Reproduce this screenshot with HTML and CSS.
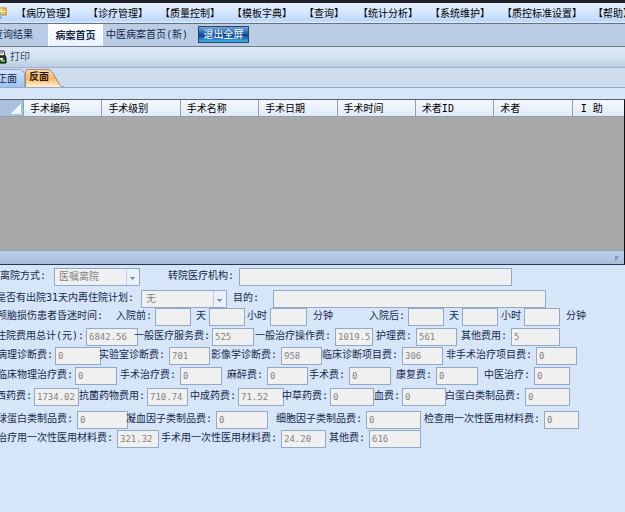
FILE: index.html
```html
<!DOCTYPE html>
<html lang="zh-CN">
<head>
<meta charset="utf-8">
<title>病案首页</title>
<link rel="stylesheet" href="styles.css">
</head>
<body>
<header class="menubar">
  <svg class="app-icon" viewBox="0 0 14 12" aria-hidden="true"><rect x="4" y="1" width="9" height="7" fill="#f7c948" stroke="#b97d1c"/><path d="M8.500 1v7M4 4.500h9" stroke="#fff3c0"/><rect x="0" y="6" width="8" height="5" fill="#dce9fa" stroke="#6f8fbf"/></svg>
  <nav class="menu">
    <button>【病历管理】</button><button>【诊疗管理】</button><button>【质量控制】</button><button>【模板字典】</button><button class="short">【查询】</button><button>【统计分析】</button><button>【系统维护】</button><button class="long">【质控标准设置】</button><button>【帮助】</button>
  </nav>
</header>
<nav class="docs">
  <button class="doc first">查询结果</button>
  <button class="doc current">病案首页</button>
  <button class="doc wide">中医病案首页(新)</button>
  <button class="exit">退出全屏</button>
</nav>
<div class="toolbar">
  <button class="print"><svg class="print-icon" viewBox="0 0 14 14" aria-hidden="true"><path d="M3 1h8l1 5H2z" fill="#fff" stroke="#222"/><path d="M4 3h6" stroke="#555"/><path d="M1 6h11l1 2v5H1z" fill="#444" stroke="#000"/><path d="M2 8h8v2H2z" fill="#d9dccf"/><path d="M8 10h4v2H8z" fill="#52c820"/></svg>打印</button>
</div>
<nav class="sides">
  <button class="side front">正面</button>
  <button class="side back"><svg class="side-shape" viewBox="0 0 39 18" preserveAspectRatio="none" aria-hidden="true"><defs><linearGradient id="warm" x2="0" y2="1"><stop offset="0" stop-color="#f6d9b4"/><stop offset=".5" stop-color="#fbb866"/><stop offset="1" stop-color="#fff0d4"/></linearGradient></defs><path d="M.5 18V3Q.5.5 3 .5H22Q27 1 29 6L34 15Q36 18 39 18" fill="url(#warm)" stroke="#a98a69"/></svg><span>反面</span></button>
</nav>
<main class="page">
  <section class="grid-box">
    <table class="ops">
      <thead><tr><th class="corner" aria-label="全选"></th><th>手术编码</th><th>手术级别</th><th>手术名称</th><th>手术日期</th><th>手术时间</th><th>术者ID</th><th>术者</th><th class="aide">I 助</th></tr></thead>
    </table>
    <div class="grid-foot"><svg class="grip" viewBox="0 0 5 6" aria-hidden="true"><path d="M0 6V1h4L1 6z" fill="#7f9cc4"/></svg></div>
  </section>
  <form class="fees">
    <div class="row r1"><label for="a1">离院方式:</label><select id="a1" disabled><option>医嘱离院</option></select><label for="a2">转院医疗机构:</label><input id="a2" disabled></div>
    <div class="row r2"><label for="b1">是否有出院31天内再住院计划:</label><select id="b1" disabled><option>无</option></select><label class="purpose" for="b2">目的:</label><input id="b2" disabled></div>
    <div class="row r3"><span>颅脑损伤患者昏迷时间:</span><label for="c1">入院前:</label><input id="c1" disabled><label for="c2">天</label><input id="c2" disabled><label for="c3">小时</label><input id="c3" disabled><span>分钟</span><label for="c4">入院后:</label><input id="c4" disabled><label for="c5">天</label><input id="c5" disabled><label for="c6">小时</label><input id="c6" disabled><span>分钟</span></div>
    <div class="row r4"><label for="d1">住院费用总计(元):</label><input id="d1" value="6842.56" disabled><label for="d2">一般医疗服务费:</label><input id="d2" value="525" disabled><label for="d3">一般治疗操作费:</label><input id="d3" value="1019.5" disabled><label for="d4">护理费:</label><input id="d4" value="561" disabled><label for="d5">其他费用:</label><input id="d5" value="5" disabled></div>
    <div class="row r5"><label for="e1">病理诊断费:</label><input id="e1" value="0" disabled><label for="e2">实验室诊断费:</label><input id="e2" value="701" disabled><label for="e3">影像学诊断费:</label><input id="e3" value="958" disabled><label for="e4">临床诊断项目费:</label><input id="e4" value="306" disabled><label for="e5">非手术治疗项目费:</label><input id="e5" value="0" disabled></div>
    <div class="row r6"><label for="f1">临床物理治疗费:</label><input id="f1" value="0" disabled><label for="f2">手术治疗费:</label><input id="f2" value="0" disabled><label for="f3">麻醉费:</label><input id="f3" value="0" disabled><label for="f4">手术费:</label><input id="f4" value="0" disabled><label for="f5">康复费:</label><input id="f5" value="0" disabled><label for="f6">中医治疗:</label><input id="f6" value="0" disabled></div>
    <div class="row r7"><label for="g1">西药费:</label><input id="g1" value="1734.02" disabled><label for="g2">抗菌药物费用:</label><input id="g2" value="710.74" disabled><label for="g3">中成药费:</label><input id="g3" value="71.52" disabled><label for="g4">中草药费:</label><input id="g4" value="0" disabled><label for="g5">血费:</label><input id="g5" value="0" disabled><label for="g6">白蛋白类制品费:</label><input id="g6" value="0" disabled></div>
    <div class="row r8"><label for="h1">球蛋白类制品费:</label><input id="h1" value="0" disabled><label for="h2">凝血因子类制品费:</label><input id="h2" value="0" disabled><label for="h3">细胞因子类制品费:</label><input id="h3" value="0" disabled><label for="h4">检查用一次性医用材料费:</label><input id="h4" value="0" disabled></div>
    <div class="row r9"><label for="i1">治疗用一次性医用材料费:</label><input id="i1" value="321.32" disabled><label for="i2">手术用一次性医用材料费:</label><input id="i2" value="24.20" disabled><label for="i3">其他费:</label><input id="i3" value="616" disabled></div>
  </form>
</main>
</body>
</html>
```
FILE: styles.css
```css
* { box-sizing: border-box; }
html { background: #d7e5f8; }
body {
  margin: 0;
  overflow: hidden;
  background: #d7e5f8;
  color: #15294b;
  font: 10px/16px "DejaVu Sans Mono", "Noto Sans CJK SC", monospace;
}
button {
  margin: 0;
  padding: 0;
  border: 0;
  background: none;
  color: inherit;
  font: inherit;
  white-space: nowrap;
}

.menubar {
  display: flex;
  align-items: center;
  height: 24px;
  overflow: hidden;
  border-top: 3px solid #1d2027;
  border-bottom: 1px solid #68727f;
  background: linear-gradient(#e6f0fd, #d5e6fc 45%, #bdd8fb 90%, #e3efff);
  color: #000;
}
.app-icon { flex: none; width: 14px; height: 12px; margin-left: -7px; }
.menu { display: flex; margin-left: 9px; padding-top: 2px; }
.menu button { flex: none; width: 72px; text-align: left; }
.menu .short { width: 54px; }
.menu .long { width: 91px; }

.docs {
  display: flex;
  height: 23px;
  border-bottom: 1px solid #6d7c90;
  background: #bacde5;
}
.doc { flex: none; line-height: 20px; }
.doc.first { width: 48px; margin-left: -7px; text-align: left; }
.doc.current {
  width: 55px;
  margin-left: 7px;
  border: 1px solid #fff;
  border-bottom: 0;
  background: linear-gradient(#fff, #e9f1fc);
  font-weight: bold;
}
.doc.wide { width: 88px; text-align: center; }
.exit {
  width: 51px;
  height: 17px;
  margin: 2px 0 0 7px;
  border: 1px solid #23466f;
  background: linear-gradient(#74a8dc, #1f5ba8 45%, #0c4391 55%, #43b4ea);
  color: #fff;
  line-height: 14px;
}

.toolbar {
  height: 21px;
  border-bottom: 1px solid #9db3d0;
  background: linear-gradient(#dfe9f5, #d3e0ef 55%, #bccce1);
}
.print { display: flex; align-items: center; height: 19px; gap: 3px; color: #38475e; }
.print-icon { width: 14px; height: 14px; margin-left: -7px; }

.sides {
  display: flex;
  height: 20px;
  padding-top: 1px;
  border-bottom: 1px solid #94a9c6;
  background: #cedcee;
}
.side { height: 18px; line-height: 15px; text-align: left; }
.front {
  width: 29px;
  margin-left: -4px;
  border: 1px solid #89a9d5;
  border-bottom: 0;
  border-radius: 0 6px 0 0;
  background: linear-gradient(#d5e5fa, #9fc2f3);
  line-height: 13px;
}
.back { display: grid; width: 39px; color: #2a1c0c; font-weight: bold; }
.back > * { grid-area: 1 / 1; }
.back span { z-index: 1; padding-left: 4px; }
.side-shape { width: 39px; height: 18px; }

.page { padding-top: 11px; }
.grid-box {
  display: flex;
  flex-direction: column;
  height: 166px;
  overflow: hidden;
  border-top: 1px solid #56616d;
  border-right: 1px solid #111;
  border-bottom: 1px solid #29364a;
  background: #a9a9a9;
}
.ops {
  width: calc(100% + 27px);
  table-layout: fixed;
  border-collapse: separate;
  border-spacing: 0;
  color: #000;
}
.ops th {
  height: 17px;
  padding: 0 0 0 6px;
  border-right: 1px solid #8fa0b5;
  border-bottom: 1px solid #8da0b8;
  background: linear-gradient(#f5f9fe, #e0eaf6);
  font-weight: normal;
  line-height: 15px;
  text-align: left;
  white-space: nowrap;
}
.ops .aide { padding-left: 8px; }
.ops .corner {
  width: 24px;
  background: linear-gradient(135deg, transparent 50%, #f0f6fd 50%) 11px 4px / 10px 10px no-repeat, #abc0dc;
}
.grid-foot {
  display: flex;
  justify-content: flex-end;
  align-items: center;
  height: 14px;
  margin-top: auto;
  padding-right: 4px;
  border-top: 1px solid #8ba0bd;
  background: linear-gradient(#bccfe8, #a9bfdc);
}
.grip { width: 5px; height: 6px; }

.fees { padding-top: 3px; }
.row {
  display: grid;
  align-items: start;
  height: 18px;
  margin-bottom: 2px;
}
.row label, .row span {
  justify-self: end;
  padding-right: 2px;
  white-space: nowrap;
}
.row input, .row select {
  width: 100%;
  min-width: 0;
  height: 18px;
  margin: 0;
  padding: 0 2px;
  border: 1px solid #92a8c8;
  border-radius: 0;
  background: #f0f0f0;
  color: #848484;
  font: 9px/16px "DejaVu Sans Mono", "Noto Sans CJK SC", monospace;
  opacity: 1;
}
.row select {
  appearance: none;
  padding-left: 4px;
  background:
    linear-gradient(#8595aa, #8595aa) right 4px top 8px / 5px 1px no-repeat,
    linear-gradient(#8595aa, #8595aa) right 5px top 9px / 3px 1px no-repeat,
    linear-gradient(#8595aa, #8595aa) right 6px top 10px / 1px 1px no-repeat,
    linear-gradient(#bdd0e9, #bdd0e9) right 12px top 0 / 1px 16px no-repeat,
    linear-gradient(#e9f1fb, #e9f1fb) right / 12px 16px no-repeat,
    #f0f0f0;
  font-size: 10px;
}
.r1 { grid-template-columns: 54px 86px 99px 273px; margin-bottom: 4px; }
.r2 { grid-template-columns: 141px 86px 46px 273px; margin-bottom: 0; }
.row .purpose { padding-right: 14px; }
.r1 label:first-child { padding-right: 8px; }
.r2 label:first-child { padding-right: 7px; }
.r1 label:nth-of-type(2) { padding-right: 5px; }
.r3 { grid-template-columns: 105px 50px 36px 18px 36px 25px 37px 28px 73px 36px 18px 36px 26px 36px 28px; }
.r3 label { padding-right: 3px; }
.r4 { grid-template-columns: 86px 52px 74px 42px 81px 38px 43px 41px 54px 49px; margin-bottom: 1px; }
.r4 label:nth-of-type(n+3) { padding-right: 4px; }
.r5 { grid-template-columns: 55px 46px 68px 41px 71px 41px 80px 41px 93px 41px; }
.r5 label:nth-of-type(n+2) { padding-right: 4px; }
.r6 { grid-template-columns: 75px 42px 63px 42px 45px 41px 41px 42px 45px 42px 56px 36px; margin-bottom: 3px; }
.r6 label:nth-of-type(n+2) { padding-right: 4px; }
.r7 { grid-template-columns: 34px 45px 68px 41px 50px 46px 46px 44px 28px 44px 79px 45px; margin-bottom: 5px; }
.r7 label:last-of-type { padding-right: 4px; }
.r8 { grid-template-columns: 77px 51px 88px 52px 98px 55px 123px 35px; margin-bottom: 1px; }
.r8 label { padding-right: 4px; }
.r9 { grid-template-columns: 117px 42px 122px 45px 43px 52px; }
.r9 label { padding-right: 4px; }
```
